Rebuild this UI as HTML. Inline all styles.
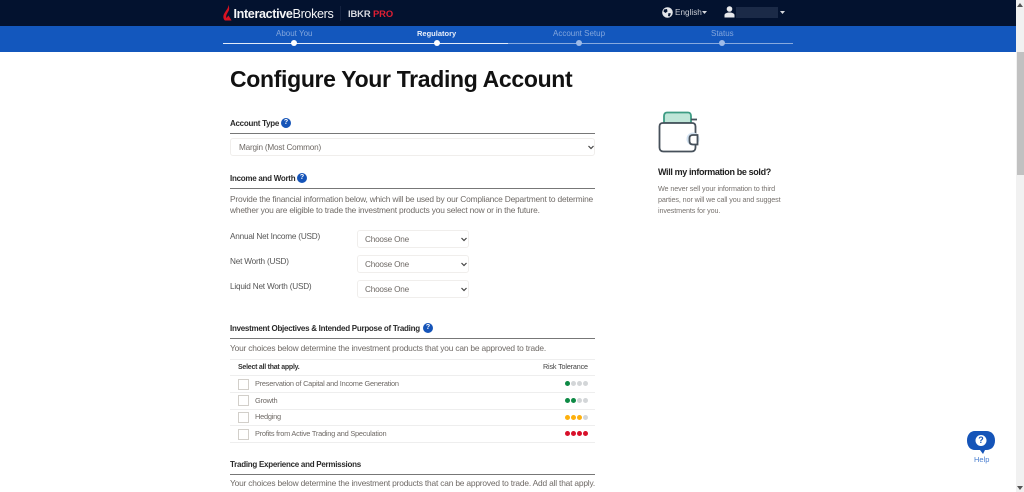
<!DOCTYPE html>
<html><head><meta charset="utf-8"><title>Configure Your Trading Account</title>
<style>
html,body{margin:0;padding:0;width:1024px;height:492px;overflow:hidden;background:#fff;font-family:"Liberation Sans",sans-serif}
.t{position:absolute;white-space:nowrap;line-height:1}
.a{position:absolute}
.h{font-size:8px;font-weight:bold;color:#2a2a2a;letter-spacing:-.27px}
.p{font-size:8.4px;color:#6f6a66;letter-spacing:-.19px}
.l{font-size:8.2px;color:#555;letter-spacing:-.2px}
.hr{position:absolute;left:230px;width:365px;height:1px;background:#777}
.q{position:absolute;width:10px;height:10px;border-radius:50%;background:#1554b8;color:#fff;font-size:7px;font-weight:bold;text-align:center;line-height:10px}
.sel{position:absolute;background:#fff;border:1px solid #f0eeec;border-radius:3px;box-sizing:border-box}
.sel span{position:absolute;left:7px;top:4px;font-size:8.2px;line-height:10px;color:#6f6a66;white-space:nowrap;letter-spacing:-.2px}
.sel svg{position:absolute;top:6px}
.row{position:absolute;left:230px;width:365px;height:1px;background:#eeeeee}
.cb{position:absolute;left:238px;width:9px;height:9px;border:1px solid #d2cfca;background:#fff}
.rt{position:absolute;left:255px;font-size:7.4px;color:#6f6a66;white-space:nowrap;line-height:1;letter-spacing:-.23px}
.d{position:absolute;width:5px;height:5px;border-radius:50%}
.g{background:#0e8a45}.n{background:#d3d6d8}.y{background:#fdb00d}.r{background:#d8102a}
.sd{position:absolute;width:6px;height:6px;border-radius:50%;top:40px}
</style></head><body>

<div class="a" style="left:0;top:0;width:1016px;height:26px;background:#03122f"></div>
<div class="a" style="left:0;top:26px;width:1016px;height:26px;background:#1357bd"></div>

<svg class="a" style="left:223px;top:5px" width="9" height="16" viewBox="0 0 9 16"><path d="M5 0C6 3 3 5 1 9 0 11 0 14 2 15.500L8.500 15.500 5.500 10.500 3.300 13C2.500 10 5 7.500 6 5 6.500 3 6 1 5 0Z" fill="#d81222"/></svg>
<div class="t" style="left:233.500px;top:8px;font-size:12.6px;font-weight:bold;color:#f4f5f7;letter-spacing:-.36px">Interactive<span style="font-weight:normal">Brokers</span></div>
<div class="a" style="left:340px;top:6px;width:1px;height:15px;background:#142240"></div>
<div class="t" style="left:348px;top:8.500px;font-size:9.400px;font-weight:bold;color:#d8dae0;letter-spacing:-.1px">IBKR <span style="color:#e01f33">PRO</span></div>

<svg class="a" style="left:662px;top:7px" width="11" height="11" viewBox="0 0 11 11"><circle cx="5.500" cy="5.500" r="5.300" fill="#e4e6ea"/><path d="M2 2.500 5 2 5.500 4.500 3.500 6 1.500 4.500ZM6.500 6 9 6.500 7.500 9.500 6 9Z" fill="#03122f"/></svg>
<div class="t" style="left:675px;top:8.500px;font-size:8.200px;color:#c9ccd3">English</div>
<svg class="a" style="left:702px;top:11px" width="5" height="3"><path d="M0 0H5L2.500 3Z" fill="#d6d8dd"/></svg>
<svg class="a" style="left:724px;top:6px" width="11" height="12" viewBox="0 0 11 12"><circle cx="5.500" cy="3" r="2.800" fill="#e8e9ec"/><path d="M.5 11.500V9C.5 7.500 3 6.500 5.500 6.500S10.500 7.500 10.500 9V11.500Z" fill="#e8e9ec"/></svg>
<div class="a" style="left:736px;top:7px;width:42px;height:11px;background:#1b2a47"></div>
<svg class="a" style="left:780px;top:11px" width="5" height="3"><path d="M0 0H5L2.500 3Z" fill="#d6d8dd"/></svg>

<div class="t" style="left:276px;top:30px;font-size:8px;color:#83a6dc">About You</div>
<div class="t" style="left:417px;top:30px;font-size:7.500px;font-weight:bold;color:#e9eff9">Regulatory</div>
<div class="t" style="left:553px;top:30px;font-size:8px;color:#83a6dc">Account Setup</div>
<div class="t" style="left:711px;top:30px;font-size:8px;color:#83a6dc">Status</div>
<div class="a" style="left:223px;top:43px;width:285px;height:1px;background:#e3ebf8"></div>
<div class="a" style="left:508px;top:43px;width:285px;height:1px;background:#87a9de"></div>
<div class="sd" style="left:291px;background:#fff"></div>
<div class="sd" style="left:434px;background:#fff"></div>
<div class="sd" style="left:576px;background:#9fbbe8"></div>
<div class="sd" style="left:719px;background:#9fbbe8"></div>

<div class="t" style="left:230px;top:68px;font-size:23px;font-weight:bold;color:#111;letter-spacing:-.33px">Configure Your Trading Account</div>

<div class="t h" style="left:230px;top:120px">Account Type</div>
<div class="q" style="left:281px;top:118px">?</div>
<div class="hr" style="top:133px"></div>
<div class="sel" style="left:230px;top:138px;width:365px;height:18px"><span style="left:8px">Margin (Most Common)</span><svg style="left:357px" width="6" height="5"><path d="M.5 1 3 3.500 5.500 1" fill="none" stroke="#444" stroke-width="1.200"/></svg></div>

<div class="t h" style="left:230px;top:175px">Income and Worth</div>
<div class="q" style="left:297px;top:173px">?</div>
<div class="hr" style="top:188px"></div>
<div class="t p" style="left:230px;top:194.500px">Provide the financial information below, which will be used by our Compliance Department to determine</div>
<div class="t p" style="left:230px;top:205.500px">whether you are eligible to trade the investment products you select now or in the future.</div>

<div class="t l" style="left:230px;top:233px">Annual Net Income (USD)</div>
<div class="sel" style="left:357px;top:230px;width:112px;height:18px"><span>Choose One</span><svg style="left:103px" width="6" height="5"><path d="M.5 1 3 3.500 5.500 1" fill="none" stroke="#444" stroke-width="1.200"/></svg></div>
<div class="t l" style="left:230px;top:258px">Net Worth (USD)</div>
<div class="sel" style="left:357px;top:255px;width:112px;height:18px"><span>Choose One</span><svg style="left:103px" width="6" height="5"><path d="M.5 1 3 3.500 5.500 1" fill="none" stroke="#444" stroke-width="1.200"/></svg></div>
<div class="t l" style="left:230px;top:283px">Liquid Net Worth (USD)</div>
<div class="sel" style="left:357px;top:280px;width:112px;height:18px"><span>Choose One</span><svg style="left:103px" width="6" height="5"><path d="M.5 1 3 3.500 5.500 1" fill="none" stroke="#444" stroke-width="1.200"/></svg></div>

<div class="t h" style="left:230px;top:325px">Investment Objectives &amp; Intended Purpose of Trading</div>
<div class="q" style="left:423px;top:323px">?</div>
<div class="hr" style="top:338px"></div>
<div class="t p" style="left:230px;top:344px">Your choices below determine the investment products that you can be approved to trade.</div>

<div class="row" style="top:359px"></div>
<div class="t" style="left:238px;top:364px;font-size:7px;font-weight:bold;color:#333;letter-spacing:-.24px">Select all that apply.</div>
<div class="t" style="left:543px;top:363px;font-size:7.200px;color:#444;letter-spacing:-.15px">Risk Tolerance</div>
<div class="row" style="top:375px"></div>
<div class="row" style="top:392px"></div>
<div class="row" style="top:409px"></div>
<div class="row" style="top:425px"></div>
<div class="row" style="top:442px"></div>

<div class="cb" style="top:378.500px"></div><div class="rt" style="top:380px">Preservation of Capital and Income Generation</div>
<div class="cb" style="top:395px"></div><div class="rt" style="top:397px">Growth</div>
<div class="cb" style="top:412px"></div><div class="rt" style="top:413px">Hedging</div>
<div class="cb" style="top:429px"></div><div class="rt" style="top:430px">Profits from Active Trading and Speculation</div>

<div class="d g" style="left:565px;top:381px"></div><div class="d n" style="left:571px;top:381px"></div><div class="d n" style="left:577px;top:381px"></div><div class="d n" style="left:583px;top:381px"></div>
<div class="d g" style="left:565px;top:398px"></div><div class="d g" style="left:571px;top:398px"></div><div class="d n" style="left:577px;top:398px"></div><div class="d n" style="left:583px;top:398px"></div>
<div class="d y" style="left:565px;top:415px"></div><div class="d y" style="left:571px;top:415px"></div><div class="d y" style="left:577px;top:415px"></div><div class="d n" style="left:583px;top:415px"></div>
<div class="d r" style="left:565px;top:431px"></div><div class="d r" style="left:571px;top:431px"></div><div class="d r" style="left:577px;top:431px"></div><div class="d r" style="left:583px;top:431px"></div>

<div class="t h" style="left:230px;top:460.500px">Trading Experience and Permissions</div>
<div class="hr" style="top:474px"></div>
<div class="t p" style="left:230px;top:479px">Your choices below determine the investment products that can be approved to trade. Add all that apply.</div>

<svg class="a" style="left:655.500px;top:110px" width="44" height="44" viewBox="0 0 44 44">
<path d="M8 13V6C8 3.500 9.500 2.500 11 2.500H32C33.500 2.500 35 3.500 35 6V13Z" fill="#bfe6d8" stroke="#3e9c84" stroke-width="1.800"/>
<path d="M35 9.500H41" fill="none" stroke="#46505a" stroke-width="1.800"/>
<path d="M7 13C4.500 13 3.500 14 3.500 16.500V37.500C3.500 40 5 41.500 7.500 41.500H35.500C38 41.500 39.500 40 39.500 37.500V16.500C39.500 14 38 13 36 13Z" fill="#fff" stroke="#46505a" stroke-width="1.800"/>
<circle cx="37" cy="29" r="6.500" fill="#d3e2f1"/>
<path d="M41.500 25H37C34.500 25 33.500 26.500 33.500 28V31C33.500 33 34.500 34.500 37 34.500H41.500Z" fill="#fff" stroke="#46505a" stroke-width="1.800"/>
</svg>
<div class="t" style="left:658px;top:167.500px;font-size:9px;font-weight:bold;color:#222;letter-spacing:-.36px">Will my information be sold?</div>
<div class="t" style="left:658px;top:185px;font-size:7.200px;color:#77726e;letter-spacing:-.1px">We never sell your information to third</div>
<div class="t" style="left:658px;top:196px;font-size:7.200px;color:#77726e;letter-spacing:-.1px">parties, nor will we call you and suggest</div>
<div class="t" style="left:658px;top:207px;font-size:7.200px;color:#77726e;letter-spacing:-.1px">investments for you.</div>

<svg class="a" style="left:966px;top:430px" width="30" height="25" viewBox="0 0 30 25"><path d="M9 1H20C26 1 29 5 29 10.500S26 20 20 20H19L17 24 14 20H9C4 20 1 16 1 10.500S4 1 9 1Z" fill="#1554b8"/><circle cx="15" cy="10.500" r="5.500" fill="#fff"/></svg>
<div class="t" style="left:975px;top:436px;width:12px;text-align:center;font-size:9px;font-weight:bold;color:#1554b8">?</div>
<div class="t" style="left:974px;top:456px;font-size:7.500px;color:#4a7fd0">Help</div>

<div class="a" style="left:1016px;top:0;width:8px;height:492px;background:#f1f1f1"></div>
<div class="a" style="left:1016.500px;top:52px;width:7px;height:123px;background:#c1c1c1"></div>
<svg class="a" style="left:1017px;top:3px" width="6" height="4"><path d="M3 0 6 4H0Z" fill="#555"/></svg>
<svg class="a" style="left:1017px;top:486px" width="6" height="4"><path d="M3 4 6 0H0Z" fill="#555"/></svg>
</body></html>
